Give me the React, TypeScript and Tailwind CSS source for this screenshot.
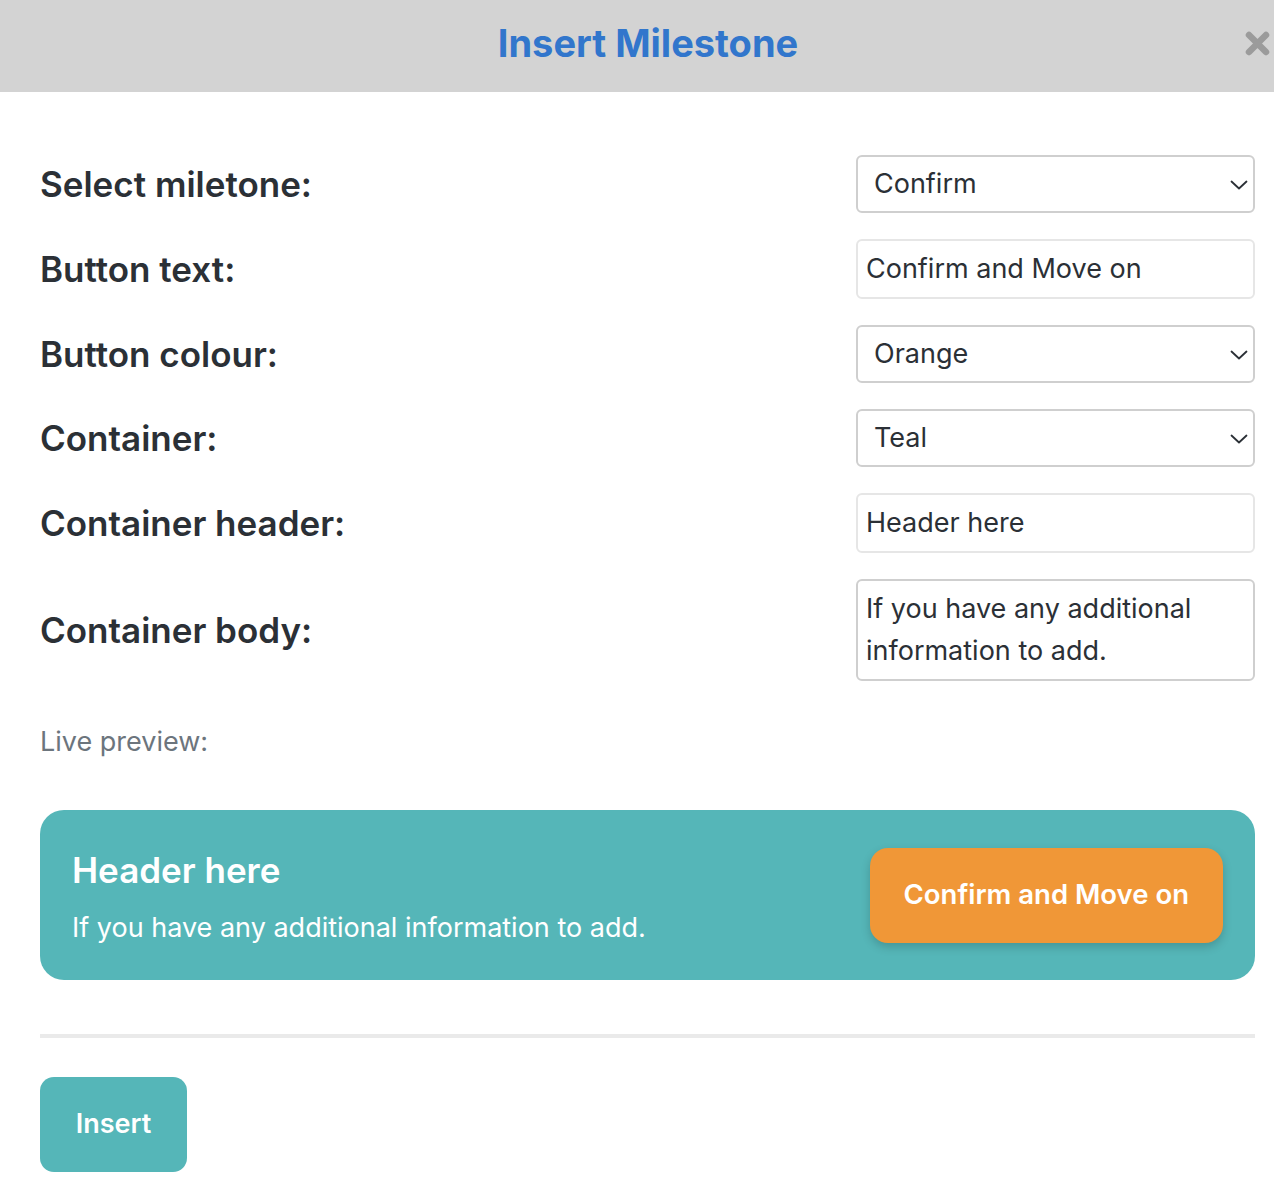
import React from 'react';

const font = { fontFamily: 'Inter, "Noto Sans", sans-serif' };

function Chevron() {
  return (
    <svg width="18" height="10" viewBox="0 0 18 10" fill="none" className="shrink-0">
      <path d="M1.5 1.5 L9 8.5 L16.5 1.5" stroke="#2b3036" strokeWidth="1.8" strokeLinecap="round" strokeLinejoin="round" />
    </svg>
  );
}

function CloseIcon() {
  return (
    <svg width="25" height="25" viewBox="0 0 25 25" className="absolute left-[1245px] top-[31px]">
      <path d="M4 4 L21 21 M21 4 L4 21" stroke="#9b9b9b" strokeWidth="6.5" strokeLinecap="round" />
    </svg>
  );
}

function SelectBox({ value }: { value: string }) {
  return (
    <div className="flex h-[58px] w-[399px] items-center justify-between rounded-[6px] border-2 border-[#cfcfcf] bg-white pl-[16px] pr-[5px] pt-[1px] text-[27px] text-[#2b3036]">
      <span>{value}</span>
      <Chevron />
    </div>
  );
}

function TextBox({ value }: { value: string }) {
  return (
    <div className="flex h-[60px] w-[399px] items-center rounded-[6px] border-2 border-[#e6e6e6] bg-white px-[8px] pt-[1px] text-[27px] text-[#2b3036]">
      {value}
    </div>
  );
}

function Row({ label, children }: { label: string; children: React.ReactNode }) {
  return (
    <div className="flex items-center justify-between">
      <div className="text-[35px] font-semibold text-[#2b3036]">{label}</div>
      {children}
    </div>
  );
}

export default function App() {
  return (
    <div className="min-h-[1192px] w-[1274px] overflow-hidden bg-white" style={font}>
      <div className="relative flex h-[92px] items-center justify-center bg-[#d3d3d3] pb-[6px] pl-[22px]">
        <h1 className="text-[38px] font-bold text-[#3176cc]">Insert Milestone</h1>
        <CloseIcon />
      </div>

      <div className="pl-[40px] pr-[19px] pt-[63px]">
        <div className="flex flex-col gap-[26px]">
          <Row label="Select miletone:">
            <SelectBox value="Confirm" />
          </Row>
          <Row label="Button text:">
            <TextBox value="Confirm and Move on" />
          </Row>
          <Row label="Button colour:">
            <SelectBox value="Orange" />
          </Row>
          <Row label="Container:">
            <SelectBox value="Teal" />
          </Row>
          <Row label="Container header:">
            <TextBox value="Header here" />
          </Row>
          <Row label="Container body:">
            <div className="h-[102px] w-[399px] rounded-[6px] border-2 border-[#cfcfcf] bg-white px-[8px] py-[7px] text-[27px] leading-[42px] text-[#2b3036]">
              If you have any additional information to add.
            </div>
          </Row>
        </div>

        <div className="mt-[41px] text-[27px] leading-[40px] text-[#6c757d]">Live preview:</div>

        <div className="mt-[48px] flex h-[170px] items-center justify-between rounded-[24px] bg-[#55b6b8] pl-[32px] pr-[32px]">
          <div className="flex flex-col pt-[3px] text-white">
            <div className="text-[35px] font-semibold leading-[44px]">Header here</div>
            <div className="mt-[18px] text-[27px] leading-[36px]">If you have any additional information to add.</div>
          </div>
          <div className="flex h-[95px] items-center rounded-[18px] bg-[#f09737] px-[34px] text-[27.5px] font-semibold text-white shadow-[0_4px_10px_rgba(0,0,0,0.18)]">
            Confirm and Move on
          </div>
        </div>

        <div className="mt-[54px] h-[4px] bg-[#eaeaea]" />

        <div className="mt-[39px] flex h-[95px] w-[147px] items-center justify-center rounded-[14px] bg-[#55b6b8] text-[27px] font-semibold text-white">
          Insert
        </div>
      </div>
    </div>
  );
}
